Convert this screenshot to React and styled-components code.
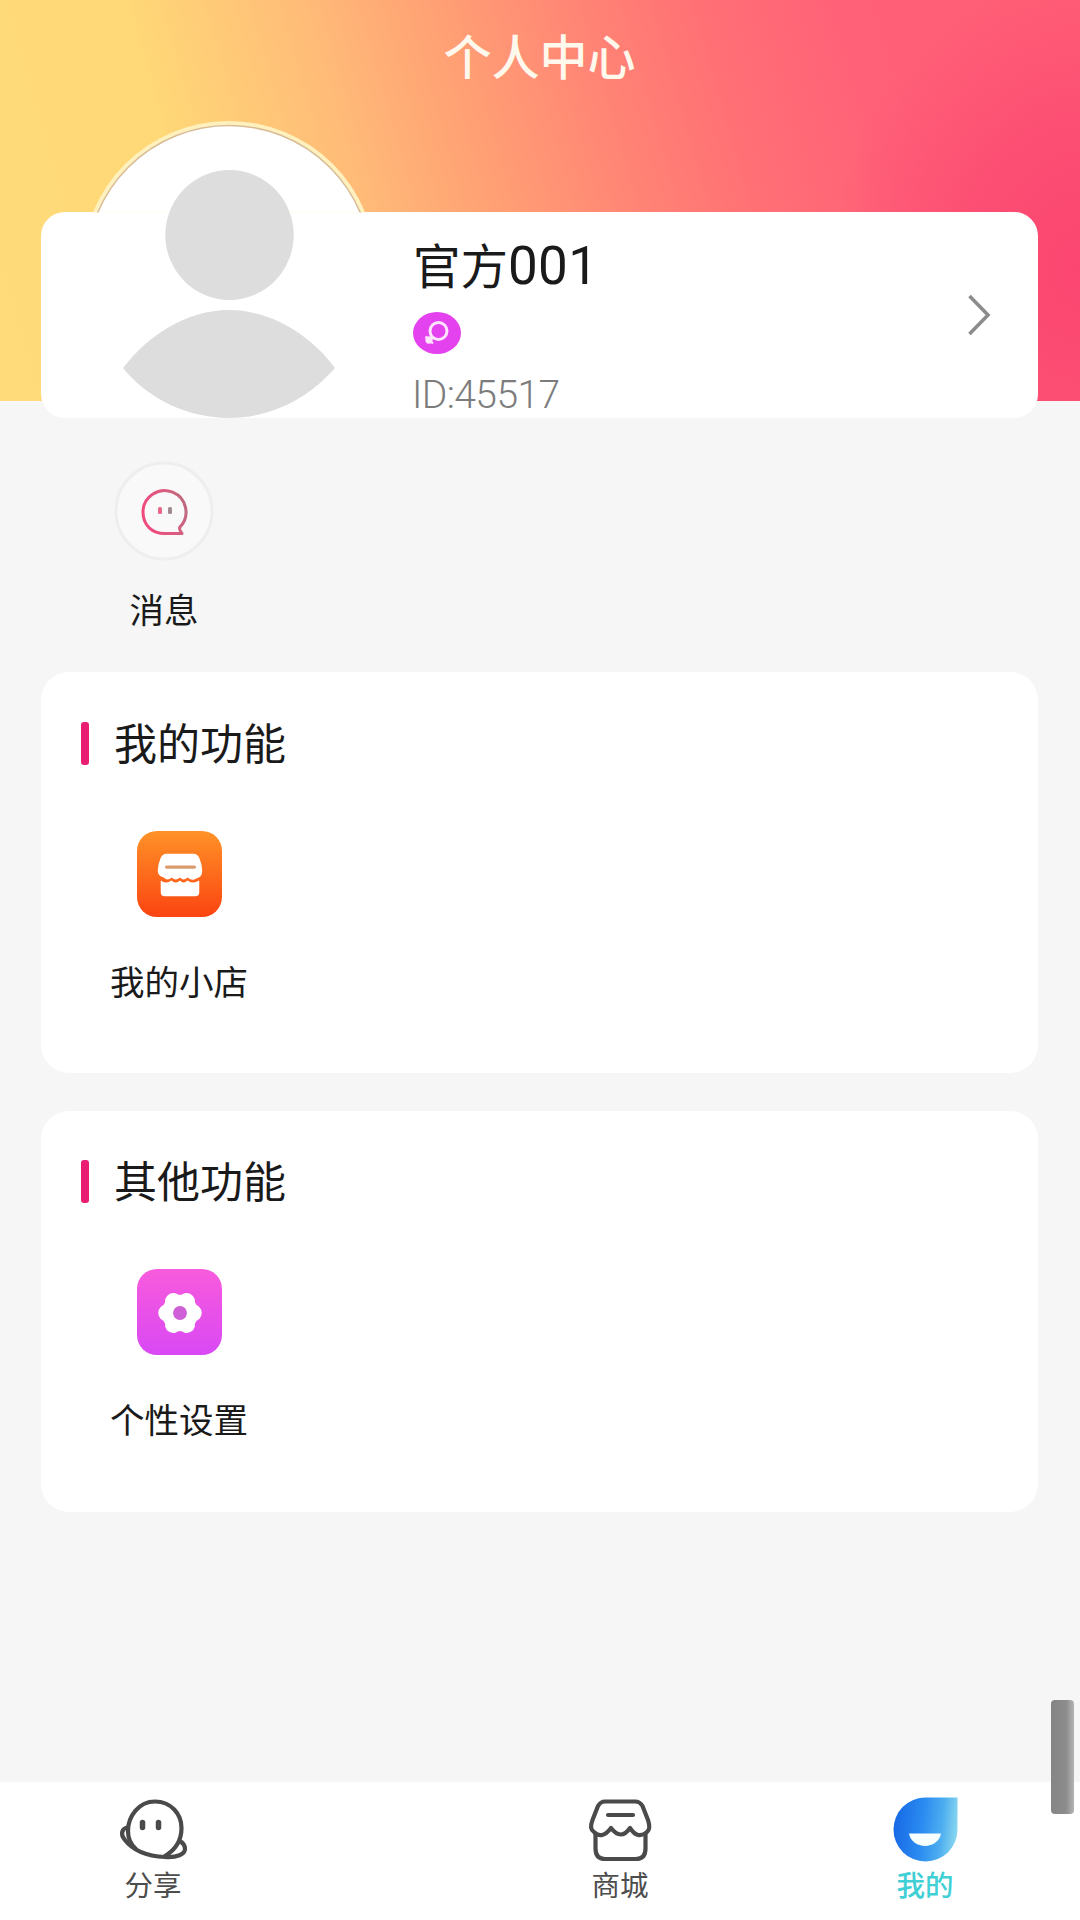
import React from 'react';
import styled, { createGlobalStyle } from 'styled-components';

const GlobalStyle = createGlobalStyle`
  * { box-sizing: border-box; }
  html, body { margin: 0; padding: 0; overflow: hidden; }
  body { background: #f6f6f6; font-family: "Noto Sans CJK SC", "Noto Sans", sans-serif; color: #1a1a1a; }
  svg { display: block; flex: none; }
`;

const Page = styled.div`
  position: relative;
  width: 1080px;
  height: 1920px;
  display: flex;
  flex-direction: column;
  background: #f6f6f6;
`;

const Header = styled.header`
  height: 401px;
  flex: none;
  padding: 0 42px 0 41px;
  background:
    radial-gradient(ellipse 250px 290px at 1080px 270px, rgba(250, 66, 112, 0.85) 0%, rgba(250, 66, 112, 0.6) 45%, rgba(250, 66, 112, 0) 100%),
    linear-gradient(74deg, #ffdb7a 0%, #ffd877 20%, #ffbb78 35%, #ffa074 46%, #ff8475 58%, #ff7075 68%, #ff6178 80%, #ff5d76 100%);
`;

const TitleBar = styled.h1`
  margin: 0 0 98px;
  height: 114px;
  line-height: 109px;
  text-align: center;
  font-size: 48px;
  font-weight: 500;
  color: #fff8ec;
`;

const ProfileCard = styled.section`
  height: 206px;
  display: flex;
  align-items: flex-start;
  padding: 0 46px 0 41px;
  border-radius: 24px;
  background: #fff;
`;

const AvatarBox = styled.div`
  width: 294px;
  height: 297px;
  flex: none;
  margin-top: -91px;
`;

const Identity = styled.div`
  flex: 1;
  display: flex;
  flex-direction: column;
  align-items: flex-start;
  padding: 22px 0 0 37px;
`;

const Name = styled.div`
  display: flex;
  align-items: baseline;
  height: 60px;
  line-height: 60px;
  font-size: 47.5px;
`;

const NameDigits = styled.span`
  font-family: Roboto, "Noto Sans", sans-serif;
  font-size: 53px;
  letter-spacing: 0.3px;
`;

const GenderBadge = styled.div`
  width: 48px;
  height: 42px;
  margin-top: 18px;
  border-radius: 50% / 50%;
  background: #e442ef;
`;

const UserId = styled.div`
  margin: 18px 0 0 -1px;
  height: 46px;
  line-height: 46px;
  font-family: Roboto, "Noto Sans", sans-serif;
  font-size: 39px;
  font-weight: 300;
  letter-spacing: -0.6px;
  color: #7c7c7c;
`;

const Arrow = styled.div`
  align-self: center;
`;

const Shortcuts = styled.nav`
  height: 271px;
  flex: none;
  padding: 60px 0 0 114px;
`;

const Shortcut = styled.div`
  width: 100px;
  display: flex;
  flex-direction: column;
  align-items: center;
`;

const Label = styled.div`
  margin-top: ${(p) => p.$gap}px;
  height: 50px;
  line-height: 50px;
  font-size: 34.5px;
  white-space: nowrap;
`;

const Panel = styled.section`
  height: 401px;
  flex: none;
  margin: 0 42px ${(p) => p.$after}px 41px;
  padding: ${(p) => p.$top}px 40px 0;
  border-radius: 28px;
  background: #fff;
`;

const PanelHead = styled.h2`
  display: flex;
  align-items: center;
  gap: 25px;
  margin: 0;
  height: 60px;
  line-height: 56px;
  font-size: 43px;
  font-weight: 400;
  &::before {
    content: "";
    width: 8px;
    height: 43px;
    border-radius: 3px;
    background: #e91e73;
  }
`;

const PanelTitle = styled.span`
  height: 60px;
`;

const PanelEntry = styled.div`
  width: 140px;
  margin: 58px 0 0 28px;
  display: flex;
  flex-direction: column;
  align-items: center;
`;

const Tile = styled.div`
  width: 85px;
  height: 86px;
  display: grid;
  place-items: center;
  border-radius: 20px;
  background: linear-gradient(${(p) => p.$from}, ${(p) => p.$to});
`;

const TabBar = styled.footer`
  height: 138px;
  margin-top: auto;
  display: grid;
  grid-template-columns: 306px 160px 308px 302px;
  background: #fff;
`;

const Tab = styled.div`
  grid-column: ${(p) => p.$column};
  display: flex;
  flex-direction: column;
  align-items: center;
  padding-top: 12px;
`;

const TabLabel = styled.div`
  height: 40px;
  line-height: 40px;
  font-size: 28.5px;
  font-weight: ${(p) => (p.$active ? 500 : 400)};
  color: ${(p) => (p.$active ? '#3fcfd5' : '#4d4d4d')};
`;

const ScrollThumb = styled.div`
  position: absolute;
  right: 6px;
  top: 1700px;
  width: 23px;
  height: 114px;
  border-radius: 4px;
  background: linear-gradient(90deg, #858585, #8c8c8c 65%, #b4b4b4);
`;

const Avatar = () => (
  <svg width="294" height="297" viewBox="0 0 294 297">
    <clipPath id="above"><rect width="294" height="91.5" /></clipPath>
    <g clipPath="url(#above)">
      <circle cx="147" cy="147" r="147" fill="#fff1bd" />
      <circle cx="147" cy="147" r="142.500" fill="#fff" stroke="#d9bd98" strokeWidth="1.6" />
    </g>
    <ellipse cx="147.500" cy="114" rx="64.200" ry="65" fill="#ddd" />
    <path d="M41 247C66 214 105 189 147 189S229 214 253 247C226 278 188 297 147 297S66 278 41 247Z" fill="#ddd" />
  </svg>
);

const GenderIcon = () => (
  <svg width="48" height="42" viewBox="0 0 48 42" fill="none" stroke="#ffe3ff" strokeWidth="3">
    <circle cx="25.500" cy="19" r="8.500" />
    <path d="M19.500 25L16 28" />
    <circle cx="16" cy="28" r="2.200" fill="#fff" />
    <path d="M12.500 24.500l7.500 7" strokeWidth="2.200" />
  </svg>
);

const Chevron = () => (
  <svg width="24" height="42" viewBox="0 0 24 42" fill="none" stroke="#8c8c8c" strokeWidth="3.600">
    <path d="M1.500 2L20 21L1.500 40" />
  </svg>
);

const MessageIcon = () => (
  <svg width="100" height="100" viewBox="0 0 100 100">
    <defs>
      <linearGradient id="msg" x1="0" y1="0.300" x2="1" y2="0">
        <stop offset="0" stopColor="#ee4b7c" />
        <stop offset="0.500" stopColor="#dc5c80" />
        <stop offset="1" stopColor="#b66c7d" />
      </linearGradient>
    </defs>
    <circle cx="50" cy="50" r="48" fill="#f9f9f9" stroke="#eeeeee" strokeWidth="3" />
    <path d="M68 72.500H52C38 73 29 64 29 51A21.500 21.500 0 1 1 66 66Q64.500 68 68 72.500Z" fill="none" stroke="url(#msg)" strokeWidth="3" strokeLinejoin="round" />
    <rect x="44" y="46" width="4" height="7" rx="1.500" fill="#ea6689" />
    <rect x="54" y="46" width="4" height="7" rx="1.500" fill="#a28a8e" />
  </svg>
);

const ShopTileIcon = () => (
  <svg width="85" height="86" viewBox="0 0 86 87">
    <path d="M30 23H57Q61 23 63 27Q66 34 66 40Q66 47 60 48Q56 51 51 47Q47 51 43.500 47Q39 51 35 47Q31 51 27 47Q21 46 21 40Q21 34 24 27Q26 23 30 23Z" fill="#fff" />
    <path d="M24 50Q29 54 35 50Q39 54 43.500 50Q47 54 51 50Q56 54 63 50V62Q63 66 59 66H28Q24 66 24 62Z" fill="#fff" />
    <path d="M30 36.500H58" stroke="#d99a6c" strokeWidth="3.400" strokeLinecap="round" />
  </svg>
);

const FlowerIcon = () => (
  <svg width="85" height="86" viewBox="0 0 86 87" fill="#fff">
    {[0, 60, 120, 180, 240, 300].map((a) => (
      <circle key={a} cx="57" cy="44.500" r="8.500" transform={`rotate(${a} 43.5 44.5)`} />
    ))}
    <circle cx="43.500" cy="44.500" r="18.500" />
    <circle cx="43.500" cy="44.500" r="7" fill="#cf5fd6" />
  </svg>
);

const PlanetIcon = () => (
  <svg width="70" height="70" viewBox="0 0 70 70" fill="none" stroke="#4a4a4a" strokeWidth="4.200" strokeLinejoin="round" strokeLinecap="round">
    <path d="M18 55C12 50 10 44 10 37C10 22 21 7.500 37 7.500C53 7.500 63.500 20 63.500 34C63.500 46 57 56 47 62" />
    <path d="M10 33.500C4 34 2 40 6.500 45.500C13 54 24 62 47 63C59 64 67 60 67 55C67 51 65.500 49 61.500 47" />
    <path d="M24.500 28.500v5M40.500 28.500v5" strokeWidth="5.500" />
  </svg>
);

const StoreIcon = () => (
  <svg width="70" height="70" viewBox="0 0 70 70" fill="none" stroke="#4a4a4a" strokeWidth="4.200" strokeLinejoin="round" strokeLinecap="round">
    <path d="M20 7.500H50Q55 7.500 57.500 12L63 26Q66 35 62 38Q53 46 45 34Q36 47 26 34Q17 46 9 38Q4 35 7.500 26L13 12Q15.500 7.500 20 7.500Z" />
    <path d="M10.500 40V54.500Q10.500 65 20 65H51Q60.500 65 60.500 54.500V40" />
    <path d="M23 21H48" />
  </svg>
);

const DropIcon = () => (
  <svg width="70" height="70" viewBox="0 0 70 70">
    <defs>
      <linearGradient id="drop" x1="0" y1="0.400" x2="1" y2="0.500">
        <stop offset="0" stopColor="#1769e5" />
        <stop offset="0.450" stopColor="#2b8cf1" />
        <stop offset="0.750" stopColor="#4dadf0" />
        <stop offset="1" stopColor="#8ad8ef" />
      </linearGradient>
    </defs>
    <path d="M35.500 3.500H67.500V35.500A32 32 0 1 1 35.500 3.500Z" fill="url(#drop)" />
    <path d="M19 39.500H51C48 56 22 56 19 39.500Z" fill="#f7ffff" />
  </svg>
);

export default function App() {
  return (
    <>
      <GlobalStyle />
      <Page>
        <Header>
          <TitleBar>个人中心</TitleBar>
          <ProfileCard>
            <AvatarBox><Avatar /></AvatarBox>
            <Identity>
              <Name>官方<NameDigits>001</NameDigits></Name>
              <GenderBadge><GenderIcon /></GenderBadge>
              <UserId>ID:45517</UserId>
            </Identity>
            <Arrow><Chevron /></Arrow>
          </ProfileCard>
        </Header>
        <Shortcuts>
          <Shortcut>
            <MessageIcon />
            <Label $gap={22}>消息</Label>
          </Shortcut>
        </Shortcuts>
        <Panel $top={41} $after={38}>
          <PanelHead><PanelTitle>我的功能</PanelTitle></PanelHead>
          <PanelEntry>
            <Tile $from="#ff9227" $to="#fb4411"><ShopTileIcon /></Tile>
            <Label $gap={38}>我的小店</Label>
          </PanelEntry>
        </Panel>
        <Panel $top={40} $after={0}>
          <PanelHead><PanelTitle>其他功能</PanelTitle></PanelHead>
          <PanelEntry>
            <Tile $from="#f85bdc" $to="#d948f4"><FlowerIcon /></Tile>
            <Label $gap={38}>个性设置</Label>
          </PanelEntry>
        </Panel>
        <TabBar>
          <Tab $column={1}>
            <PlanetIcon />
            <TabLabel>分享</TabLabel>
          </Tab>
          <Tab $column={3}>
            <StoreIcon />
            <TabLabel>商城</TabLabel>
          </Tab>
          <Tab $column={4}>
            <DropIcon />
            <TabLabel $active>我的</TabLabel>
          </Tab>
        </TabBar>
        <ScrollThumb />
      </Page>
    </>
  );
}
